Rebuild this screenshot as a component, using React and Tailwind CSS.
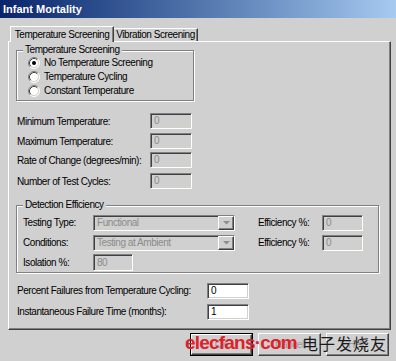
import React from "react";

const raised =
  "border border-t-white border-l-white border-r-[#404040] border-b-[#404040] shadow-[inset_-1px_-1px_0_#808080]";
const sunken =
  "border border-t-[#808080] border-l-[#808080] border-r-white border-b-white shadow-[inset_1px_1px_0_#404040,inset_-1px_-1px_0_#d4d0c8]";

function Radio({ checked, label }) {
  return (
    <div className="h-[14px] flex items-center">
      <svg width="12" height="12" viewBox="0 0 12 12" className="shrink-0">
        <circle cx="6" cy="6" r="5" fill="white" />
        <path d="M9.89 2.11 A5.5 5.5 0 0 0 2.11 9.89" stroke="#808080" strokeWidth="1" fill="none" />
        <path d="M2.11 9.89 A5.5 5.5 0 0 0 9.89 2.11" stroke="#ffffff" strokeWidth="1" fill="none" />
        <path d="M9.18 2.82 A4.5 4.5 0 0 0 2.82 9.18" stroke="#404040" strokeWidth="1" fill="none" />
        <path d="M2.82 9.18 A4.5 4.5 0 0 0 9.18 2.82" stroke="#d4d0c8" strokeWidth="1" fill="none" />
        {checked && <circle cx="6" cy="6" r="2" fill="#000" />}
      </svg>
      <span className="ml-[4px]">{label}</span>
    </div>
  );
}

function DisabledInput({ value, w = "w-[42px]", h = "h-[16px]" }) {
  return (
    <div className={`${sunken} ${w} ${h} bg-[#d0d0d0] flex items-center pl-[3px] text-[#8c8c8c]`}>
      {value}
    </div>
  );
}

function WhiteInput({ value }) {
  return (
    <div className={`${sunken} w-[42px] h-[16px] bg-white flex items-center pl-[3px] text-black`}>
      {value}
    </div>
  );
}

function DisabledSelect({ value }) {
  return (
    <div className={`${sunken} w-[142px] h-[16px] bg-[#d0d0d0] flex items-center text-[#8c8c8c]`}>
      <span className="pl-[3px] flex-1">{value}</span>
      <div className={`${raised} w-[16px] h-full bg-[#d0d0d0] flex items-center justify-center`}>
        <svg width="7" height="4" viewBox="0 0 7 4">
          <path d="M0 0 H7 L3.5 3.5 Z" fill="#8c8c8c" />
        </svg>
      </div>
    </div>
  );
}

function FieldRow({ label, mt, children }) {
  return (
    <div className={`flex items-center pl-[8px] ${mt}`}>
      <span className="w-[133px] pt-[2px]">{label}</span>
      {children}
    </div>
  );
}

export default function App() {
  return (
    <div className="w-[396px] h-[361px] bg-[#d0d0d0] overflow-hidden relative text-[10px] tracking-[-0.45px] whitespace-nowrap leading-none text-black font-['Liberation_Sans',Arial,sans-serif]">
      {/* Title bar */}
      <div className="h-[18px] bg-linear-to-r from-[#0a246a] to-[#a6caf0] flex items-center pl-[3px] text-white font-bold text-[11px] tracking-normal">
        Infant Mortality
      </div>

      <div className="pl-[8px] pt-[8px]">
        {/* Tabs */}
        <div className="flex items-end pl-[2px] relative z-10 mb-[-1px]">
          <div className="h-[16px] w-[104px] bg-[#d0d0d0] border-l border-t border-r border-l-white border-t-white border-r-[#404040] shadow-[inset_-1px_0_0_#808080] flex items-center justify-center pt-[1px]">
            Temperature Screening
          </div>
          <div className="h-[13px] w-[84px] mb-[1px] border-t border-r border-t-white border-r-[#404040] shadow-[inset_-1px_0_0_#808080] flex items-center justify-center">
            Vibration Screening
          </div>
        </div>

        {/* Panel */}
        <div className={`${raised} w-[383px] h-[289px] flex flex-col`}>
          {/* Group 1 */}
          <div className="relative ml-[7px] mt-[8px] w-[178px] h-[51px] border border-[#808080] shadow-[inset_1px_1px_0_white,1px_1px_0_white] flex flex-col pl-[11px]">
            <span className="absolute left-[6px] -top-[6px] px-[2px] bg-[#d0d0d0]">Temperature Screening</span>
            <div className="mt-[5px]">
              <Radio checked label="No Temperature Screening" />
              <Radio label="Temperature Cycling" />
              <Radio label="Constant Temperature" />
            </div>
          </div>

          <FieldRow label="Minimum Temperature:" mt="mt-[12px]">
            <DisabledInput value="0" />
          </FieldRow>
          <FieldRow label="Maximum Temperature:" mt="mt-[4px]">
            <DisabledInput value="0" />
          </FieldRow>
          <FieldRow label="Rate of Change (degrees/min):" mt="mt-[3px]">
            <DisabledInput value="0" />
          </FieldRow>
          <FieldRow label="Number of Test Cycles:" mt="mt-[5px]">
            <DisabledInput value="0" />
          </FieldRow>

          {/* Group 2 */}
          <div className="relative ml-[7px] mt-[16px] w-[363px] h-[68px] border border-[#808080] shadow-[inset_1px_1px_0_white,1px_1px_0_white] flex flex-col pl-[6px]">
            <span className="absolute left-[6px] -top-[6px] px-[2px] bg-[#d0d0d0]">Detection Efficiency</span>
            <div className="flex items-center mt-[9px]">
              <span className="w-[70px]">Testing Type:</span>
              <DisabledSelect value="Functional" />
              <span className="ml-[23px] w-[64px]">Efficiency %:</span>
              <DisabledInput value="0" w="w-[41px]" />
            </div>
            <div className="flex items-center mt-[4px]">
              <span className="w-[70px]">Conditions:</span>
              <DisabledSelect value="Testing at Ambient" />
              <span className="ml-[23px] w-[64px]">Efficiency %:</span>
              <DisabledInput value="0" w="w-[41px]" />
            </div>
            <div className="flex items-center mt-[3px]">
              <span className="w-[70px]">Isolation %:</span>
              <DisabledInput value="80" w="w-[40px]" h="h-[17px]" />
            </div>
          </div>

          <div className="flex items-center pl-[8px] mt-[10px]">
            <span className="w-[190px]">Percent Failures from Temperature Cycling:</span>
            <WhiteInput value="0" />
          </div>
          <div className="flex items-center pl-[8px] mt-[5px]">
            <span className="w-[190px]">Instantaneous Failure Time (months):</span>
            <WhiteInput value="1" />
          </div>
        </div>

        {/* Buttons */}
        <div className="flex justify-end pr-[7px] mt-[3px] gap-[5px] text-[#9a9a9a]">
          <div className="w-[63px] h-[23px] border border-black">
            <div className={`${raised} w-full h-full flex items-center justify-center`}>OK</div>
          </div>
          <div className={`${raised} w-[63px] h-[23px] flex items-center justify-center`}>Cancel</div>
          <div className={`${raised} w-[63px] h-[23px] flex items-center justify-center`}>Help</div>
        </div>
      </div>

      {/* Watermark */}
      <div className="absolute left-[185px] top-[333px] text-[19px] font-bold tracking-[-0.8px] text-[#e0202a] leading-none">
        elecfans·com
      </div>
      <div className="absolute left-[302px] top-[335px] text-[16px] tracking-[1px] text-[#1a1a1a] font-['Noto_Sans_CJK_SC',sans-serif] leading-none">
        电子发烧友
      </div>
    </div>
  );
}
